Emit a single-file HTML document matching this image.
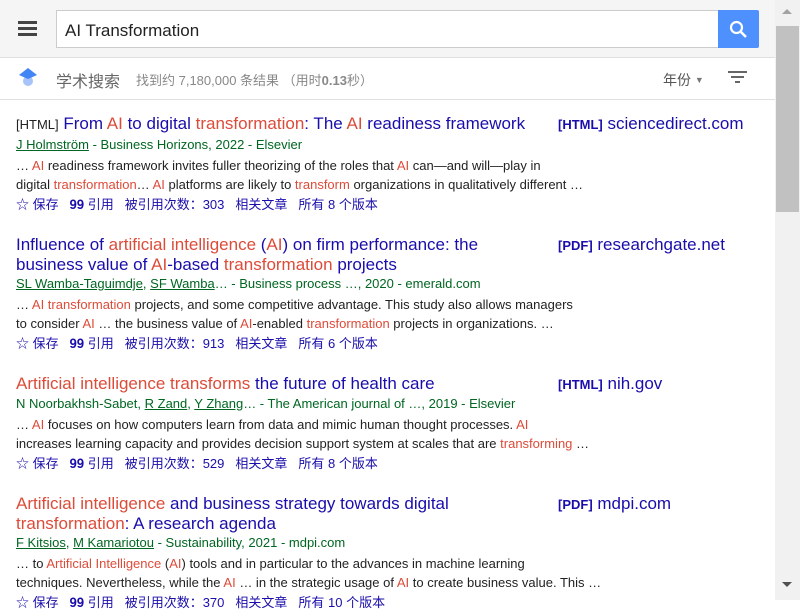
<!DOCTYPE html>
<html><head><meta charset="utf-8"><style>
*{margin:0;padding:0;box-sizing:border-box}
body{width:800px;height:600px;overflow:hidden;background:#fff;font-family:"Liberation Sans","Noto Sans CJK SC",sans-serif;position:relative}
.hdr{position:absolute;left:0;top:0;width:775px;height:58px;background:#f5f5f5;border-bottom:1px solid #e0e0e0}
.menu{position:absolute;left:18px;width:19px;height:3px;background:#444}
.sb{position:absolute;left:56px;top:10px;width:663px;height:38px;background:#fff;border:1px solid #ccc;border-right:none;font-size:17px;color:#222;padding:10px 0 0 8px}
.btn{position:absolute;left:718px;top:10px;width:41px;height:38px;background:#4d90fe;border-radius:0 2px 2px 0}
.bar2{position:absolute;left:0;top:58px;width:775px;height:42px;border-bottom:1px solid #e0e0e0}
.r{position:absolute;left:16px;width:570px}
.t{font-size:17px;line-height:19.5px;color:#1a0dab}
.h{color:#dd4b39}
.a{font-size:13px;line-height:20px;color:#006621;margin-top:0px;white-space:nowrap}
.s{font-size:13px;line-height:19px;color:#222;margin-top:1px;white-space:nowrap}
.act{font-size:13px;line-height:20px;color:#1a0dab;margin-top:1px;white-space:nowrap}
.act span{margin-right:11px}
.side{position:absolute;left:558px;font-size:17px;color:#1a0dab}
.side b{font-size:13px;font-weight:bold}
.tag{font-size:13px;color:#222}
.scr{position:absolute;left:775px;top:0;width:25px;height:600px;background:#f1f1f1}
</style></head><body>
<div class="hdr">
<div class="menu" style="top:21px"></div><div class="menu" style="top:27px"></div><div class="menu" style="top:33px"></div>
<div class="sb">AI Transformation</div>
<div class="btn"><svg width="41" height="38" viewBox="0 0 41 38"><circle cx="18.5" cy="17.5" r="5.5" fill="none" stroke="#fff" stroke-width="2.2"/><line x1="22.5" y1="21.5" x2="28" y2="27" stroke="#fff" stroke-width="2.6"/></svg></div>
</div>
<div class="bar2">
<svg style="position:absolute;left:17px;top:10px" width="22" height="20" viewBox="0 0 22 20"><circle cx="11" cy="13" r="5" fill="#a6c4fa"/><path d="M2 7 L11 0 L20 7 L11 11Z" fill="#4285f4"/></svg>
<div style="position:absolute;left:56px;top:10px;font-size:16px;color:#666">学术搜索</div>
<div style="position:absolute;left:136px;top:12px;font-size:13px;color:#888">找到约 7,180,000 条结果 （用时<b>0.13</b>秒）</div>
<div style="position:absolute;left:663px;top:12px;font-size:14px;color:#555">年份 <span style="font-size:9px;color:#777;vertical-align:2px">▼</span></div>
<div style="position:absolute;left:728px;top:13px;width:19px;height:2px;background:#666"></div>
<div style="position:absolute;left:731px;top:18px;width:13px;height:2px;background:#666"></div>
<div style="position:absolute;left:735px;top:23px;width:5px;height:2px;background:#666"></div>
</div>

<div class="r" style="top:114px">
<div class="t"><span class="tag">[HTML]</span> From <span class="h">AI</span> to digital <span class="h">transformation</span>: The <span class="h">AI</span> readiness framework</div>
<div class="a"><u>J Holmström</u> - Business Horizons, 2022 - Elsevier</div>
<div class="s">… <span class="h">AI</span> readiness framework invites fuller theorizing of the roles that <span class="h">AI</span> can—and will—play in<br>digital <span class="h">transformation</span>… <span class="h">AI</span> platforms are likely to <span class="h">transform</span> organizations in qualitatively different …</div>
<div class="act"><span>☆ 保存</span><span>𝟗𝟗 引用</span><span>被引用次数：303</span><span>相关文章</span><span>所有 8 个版本</span></div>
</div>
<div class="side" style="top:114px"><b>[HTML]</b> sciencedirect.com</div>

<div class="r" style="top:235px">
<div class="t">Influence of <span class="h">artificial intelligence</span> (<span class="h">AI</span>) on firm performance: the<br>business value of <span class="h">AI</span>-based <span class="h">transformation</span> projects</div>
<div class="a"><u>SL Wamba-Taguimdje</u>, <u>SF Wamba</u>… - Business process …, 2020 - emerald.com</div>
<div class="s">… <span class="h">AI transformation</span> projects, and some competitive advantage. This study also allows managers<br>to consider <span class="h">AI</span> … the business value of <span class="h">AI</span>-enabled <span class="h">transformation</span> projects in organizations. …</div>
<div class="act"><span>☆ 保存</span><span>𝟗𝟗 引用</span><span>被引用次数：913</span><span>相关文章</span><span>所有 6 个版本</span></div>
</div>
<div class="side" style="top:235px"><b>[PDF]</b> researchgate.net</div>

<div class="r" style="top:374px">
<div class="t"><span class="h">Artificial intelligence transforms</span> the future of health care</div>
<div class="a">N Noorbakhsh-Sabet, <u>R Zand</u>, <u>Y Zhang</u>… - The American journal of …, 2019 - Elsevier</div>
<div class="s">… <span class="h">AI</span> focuses on how computers learn from data and mimic human thought processes. <span class="h">AI</span><br>increases learning capacity and provides decision support system at scales that are <span class="h">transforming</span> …</div>
<div class="act"><span>☆ 保存</span><span>𝟗𝟗 引用</span><span>被引用次数：529</span><span>相关文章</span><span>所有 8 个版本</span></div>
</div>
<div class="side" style="top:374px"><b>[HTML]</b> nih.gov</div>

<div class="r" style="top:494px">
<div class="t"><span class="h">Artificial intelligence</span> and business strategy towards digital<br><span class="h">transformation</span>: A research agenda</div>
<div class="a"><u>F Kitsios</u>, <u>M Kamariotou</u> - Sustainability, 2021 - mdpi.com</div>
<div class="s">… to <span class="h">Artificial Intelligence</span> (<span class="h">AI</span>) tools and in particular to the advances in machine learning<br>techniques. Nevertheless, while the <span class="h">AI</span> … in the strategic usage of <span class="h">AI</span> to create business value. This …</div>
<div class="act"><span>☆ 保存</span><span>𝟗𝟗 引用</span><span>被引用次数：370</span><span>相关文章</span><span>所有 10 个版本</span></div>
</div>
<div class="side" style="top:494px"><b>[PDF]</b> mdpi.com</div>

<div class="scr">
<div style="position:absolute;left:7px;top:9px;width:0;height:0;border-left:5px solid transparent;border-right:5px solid transparent;border-bottom:5px solid #a3a3a3"></div>
<div style="position:absolute;left:1px;top:26px;width:23px;height:186px;background:#c1c1c1"></div>
<div style="position:absolute;left:7px;top:582px;width:0;height:0;border-left:5px solid transparent;border-right:5px solid transparent;border-top:5px solid #505050"></div>
</div>
</body></html>
